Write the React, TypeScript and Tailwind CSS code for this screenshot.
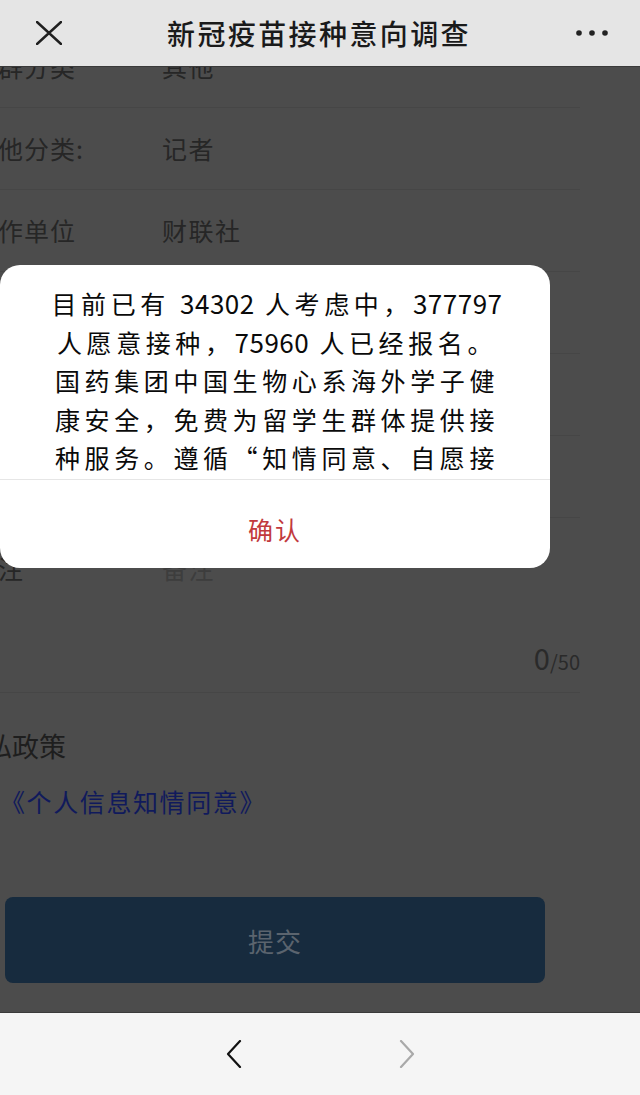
import React from 'react';

// 新冠疫苗接种意向调查 — form page dimmed behind an alert dialog

const font = {
  fontFamily: '"Noto Sans CJK SC", "Noto Sans", "Liberation Sans", sans-serif',
};

const rows: { label: string; value: string }[] = [
  { label: '人群分类', value: '其他' },
  { label: '其他分类:', value: '记者' },
  { label: '工作单位', value: '财联社' },
  { label: '所在国家', value: '中国' },
  { label: '所在城市', value: '上海' },
  { label: '接种意向', value: '已报名' },
];

const dialogLines = [
  '目前已有 34302 人考虑中，377797',
  '人愿意接种，75960 人已经报名。',
  '国药集团中国生物心系海外学子健',
  '康安全，免费为留学生群体提供接',
  '种服务。遵循“知情同意、自愿接',
  '种”原则，为有需要的留学生提供',
];

function CloseIcon() {
  return (
    <svg width="26" height="24" viewBox="0 0 26 24" fill="none">
      <path d="M1 1 L25 23 M25 1 L1 23" stroke="#1f1f1f" strokeWidth="2.4" strokeLinecap="round" />
    </svg>
  );
}

function MoreIcon() {
  return (
    <svg width="32" height="8" viewBox="0 0 32 8" fill="#222">
      <circle cx="3" cy="4" r="2.8" />
      <circle cx="16" cy="4" r="2.8" />
      <circle cx="29" cy="4" r="2.8" />
    </svg>
  );
}

function Chevron({ dir, color }: { dir: 'left' | 'right'; color: string }) {
  const d = dir === 'left' ? 'M14 1 L2 14 L14 27' : 'M2 1 L14 14 L2 27';
  return (
    <svg width="16" height="28" viewBox="0 0 16 28" fill="none">
      <path d={d} stroke={color} strokeWidth="2.2" strokeLinecap="round" strokeLinejoin="round" />
    </svg>
  );
}

// digits are spaced tighter than the CJK glyphs
function DialogLine({ text }: { text: string }) {
  const parts = text.split(/(\d+)/);
  return (
    <div className="text-center text-[25px] leading-[38.5px] tracking-[4.6px] text-[#0a0a0a]">
      {parts.map((p, i) =>
        /^\d+$/.test(p) ? (
          <span key={i} className="text-[26px] tracking-[0.5px]">
            {p}
          </span>
        ) : (
          <span key={i}>{p}</span>
        ),
      )}
    </div>
  );
}

export default function App() {
  return (
    <div style={font} className="flex h-[1095px] w-[640px] flex-col overflow-hidden bg-[#4c4c4c]">
      {/* top bar */}
      <header className="flex h-[67px] shrink-0 items-center border-b border-[#3a3a3a] bg-[#e5e5e5] pl-[36px] pr-[32px]">
        <CloseIcon />
        <h1 className="flex-1 text-center text-[28px] leading-none font-medium tracking-[2.4px] text-[#1a1a1a]">
          新冠疫苗接种意向调查
        </h1>
        <MoreIcon />
      </header>

      {/* dimmed page */}
      <main className="relative flex-1 overflow-hidden">
        <div className="-mt-[41px] -ml-[28px] w-[608px]">
          {rows.map((r) => (
            <div key={r.label} className="flex h-[82px] items-center border-b border-[#464646]">
              <span className="w-[190px] text-[25px] tracking-[1px] text-[#262626]">{r.label}</span>
              <span className="text-[25px] tracking-[1.5px] text-[#262626]">{r.value}</span>
            </div>
          ))}

          <div className="flex h-[175px] flex-col border-b border-[#464646] pt-[32px]">
            <div className="flex items-center">
              <span className="w-[190px] text-[25px] leading-[36px] tracking-[1px] text-[#262626]">备注</span>
              <span className="text-[25px] leading-[36px] tracking-[1.5px] text-[#3d3d3d]">备注</span>
            </div>
            <div className="mt-auto mb-[20px] flex items-baseline justify-end text-[#2a2a2a]">
              <span className="text-[29px] leading-none">0</span>
              <span className="text-[20px] leading-none">/50</span>
            </div>
          </div>

          <h2 className="mt-[35px] -ml-[14px] text-[27px] leading-[36px] text-[#1e1e1e]">隐私政策</h2>
          <p className="mt-[19px] pl-[28px] text-[25px] leading-[36px] tracking-[1.6px] text-[#101a5c]">
            《个人信息知情同意》
          </p>

          <div className="mt-[78px] ml-[33px] flex h-[86px] w-[540px] items-center justify-center rounded-[8px] bg-[#172b3e]">
            <span className="text-[26px] tracking-[1px] text-[#5b646e]">提交</span>
          </div>
        </div>

        {/* alert dialog */}
        <div className="absolute top-[198px] left-0 flex h-[303px] w-[550px] flex-col overflow-hidden rounded-[20px] bg-white">
          <div className="h-[215px] shrink-0 overflow-hidden border-b border-[#e6e6e6] pt-[19px] pl-[4px]">
            {dialogLines.map((l) => (
              <DialogLine key={l} text={l} />
            ))}
          </div>
          <div className="flex flex-1 items-center justify-center pt-[11px]">
            <span className="text-[25px] tracking-[2px] text-[#c23a3d]">确认</span>
          </div>
        </div>
      </main>

      {/* browser toolbar */}
      <footer className="flex h-[83px] shrink-0 items-start justify-center gap-[157px] border-t border-[#3a3a3a] bg-[#f5f5f5] pt-[27px]">
        <Chevron dir="left" color="#111111" />
        <Chevron dir="right" color="#a9a9a9" />
      </footer>
    </div>
  );
}
